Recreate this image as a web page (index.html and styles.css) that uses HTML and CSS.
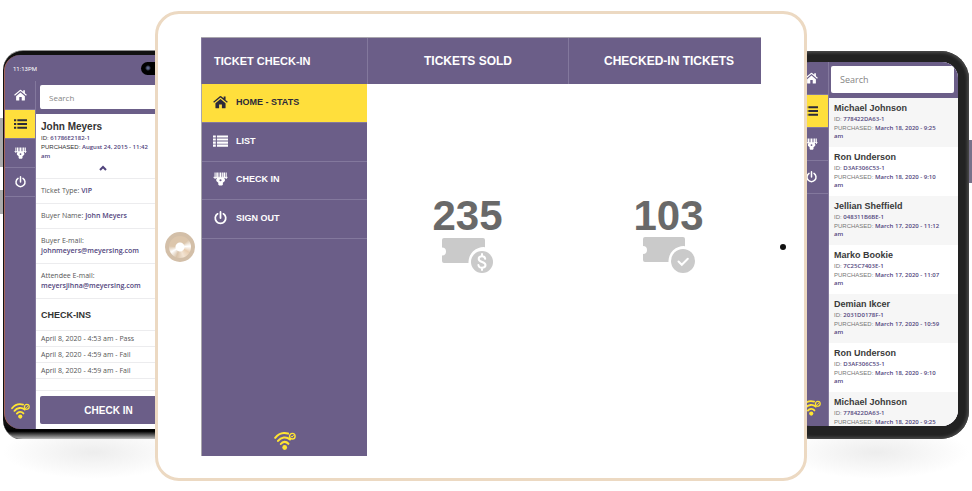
FILE: index.html
```html
<!DOCTYPE html>
<html lang="en">

<head>
    <meta charset="UTF-8">
    <meta name="viewport" content="width=device-width, initial-scale=1.0">
    <title>Ticket Check-In</title>
    <link rel="stylesheet" href="styles.css">
</head>

<body>
    <!-- Shared icons -->
    <svg class="icon-defs" width="0" height="0" aria-hidden="true">
        <symbol id="icon-home" viewBox="0 0 16 14">
            <path d="M8 3.9 2.6 8.4V13a.7.7 0 0 0 .7.7h3.2V9.6h3v4.1h3.2a.7.7 0 0 0 .7-.7V8.4z" />
            <path d="M15.8 6.8 13.4 4.8V1h-2v2.1L8.7.8a1.1 1.1 0 0 0-1.4 0L.2 6.8l.9 1.1L8 2.2l6.9 5.7z" />
        </symbol>
        <symbol id="icon-list" viewBox="0 0 16 12">
            <path d="M0 0h3v2.2H0zM4.2 0H16v2.2H4.2zM0 3.3h3v2.2H0zM4.2 3.3H16v2.2H4.2zM0 6.6h3v2.2H0zM4.2 6.6H16v2.2H4.2zM0 9.8h3V12H0zM4.2 9.8H16V12H4.2z" />
        </symbol>
        <symbol id="icon-bullets" viewBox="0 0 14 11">
            <path d="M0 .5h2.4v2H0zM3.6.5H14v2H3.6zM0 4.5h2.4v2H0zM3.6 4.5H14v2H3.6zM0 8.5h2.4v2H0zM3.6 8.5H14v2H3.6z" />
        </symbol>
        <symbol id="icon-scan" viewBox="0 0 16 16">
            <path d="M1.200.5h1.200v7.500H1.200zM3.200.5h1.800v6H3.200zM5.700.5h1v6h-1zM7.300.5H9v6H7.300zM9.700.5h1v6h-1zM11.400.5h1.800v6h-1.800zM13.900.5h1.200v7.500h-1.200z" />
            <path d="M0 5.500h16v1.200H0z" />
            <path fill-rule="evenodd" d="M4 6.800h8.200l.8 1.200v2.400l-2.300 1.800v2.500l-1 .8H6.500l-1-.8v-2.500L3.200 10.400V8zM8 8.200a1.200 1.200 0 1 0 0 2.400 1.200 1.200 0 0 0 0-2.400z" />
        </symbol>
        <symbol id="icon-power" viewBox="0 0 16 16">
            <path d="M4.700 3.200a6 6 0 1 0 6.600 0M8 1v7" fill="none" stroke="currentColor" stroke-width="2" stroke-linecap="round" />
        </symbol>
        <symbol id="icon-wifi" viewBox="0 0 22 18">
            <g fill="none" stroke="currentColor" stroke-width="2.100" stroke-linecap="round">
                <path d="M1.200 5.800C4.500 1.800 9.500.3 14 1.600" />
                <path d="M4 8.900c3-3.800 8.400-4.700 12-1.400" />
                <path d="M6.800 12c2-2.700 5.400-2.800 7.600-.2" />
                <circle cx="18.300" cy="4.200" r="2.800" stroke-width="1.400" />
                <path d="m17.300 4.400.7.700 1.400-1.700" stroke-width="1" />
            </g>
            <circle cx="10.700" cy="15.500" r="2.400" />
        </symbol>
    </svg>

    <main class="showcase">

        <!-- Phone: attendee details -->
        <section class="phone phone-left">
            <span class="side-button volume"></span>
            <span class="side-button power"></span>
            <div class="phone-screen">
                <div class="status-bar">
                    <span>11:13PM</span>
                    <span class="camera-pill"></span>
                </div>
                <div class="phone-body">
                    <nav class="phone-nav">
                        <a href="#" aria-label="Home"><svg class="icon"><use href="#icon-home" /></svg></a>
                        <a href="#" class="active" aria-label="List"><svg class="icon"><use href="#icon-bullets" /></svg></a>
                        <a href="#" aria-label="Check in"><svg class="icon"><use href="#icon-scan" /></svg></a>
                        <a href="#" aria-label="Sign out"><svg class="icon"><use href="#icon-power" /></svg></a>
                        <svg class="wifi"><use href="#icon-wifi" /></svg>
                    </nav>
                    <div class="phone-content">
                        <div class="search-bar">
                            <input type="search" placeholder="Search" aria-label="Search attendees">
                        </div>
                        <div class="attendee">
                            <h2>John Meyers</h2>
                            <p class="code">ID: <b>61786E2182-1</b></p>
                            <p class="date">PURCHASED: <b>August 24, 2015 - 11:42 am</b></p>
                            <svg class="chevron" viewBox="0 0 8 6"><path d="M1 5l3-3 3 3" /></svg>
                        </div>
                        <p class="field">Ticket Type: <b>VIP</b></p>
                        <p class="field">Buyer Name: <b>John Meyers</b></p>
                        <p class="field">Buyer E-mail:<br><b>johnmeyers@meyersing.com</b></p>
                        <p class="field">Attendee E-mail:<br><b>meyersjihna@meyersing.com</b></p>
                        <h3>CHECK-INS</h3>
                        <ul class="log">
                            <li>April 8, 2020 - 4:53 am - Pass</li>
                            <li>April 8, 2020 - 4:59 am - Fail</li>
                            <li>April 8, 2020 - 4:59 am - Fail</li>
                        </ul>
                        <div class="action">
                            <button type="button">CHECK IN</button>
                        </div>
                    </div>
                </div>
            </div>
        </section>

        <!-- Tablet: stats -->
        <section class="tablet">
            <span class="home-button"></span>
            <div class="tablet-screen">
                <header class="tablet-header">
                    <h1>TICKET CHECK-IN</h1>
                    <h2>TICKETS SOLD</h2>
                    <h2>CHECKED-IN TICKETS</h2>
                </header>
                <aside class="sidebar">
                    <nav class="menu">
                        <a href="#" class="active"><svg class="icon"><use href="#icon-home" /></svg>HOME - STATS</a>
                        <a href="#"><svg class="icon"><use href="#icon-list" /></svg>LIST</a>
                        <a href="#"><svg class="icon"><use href="#icon-scan" /></svg>CHECK IN</a>
                        <a href="#"><svg class="icon"><use href="#icon-power" /></svg>SIGN OUT</a>
                    </nav>
                    <svg class="wifi"><use href="#icon-wifi" /></svg>
                </aside>
                <div class="stats">
                    <div class="stat">
                        <strong>235</strong>
                        <svg class="ticket" viewBox="0 0 52 37">
                            <path d="M2 1h39a2 2 0 0 1 2 2v7.200A15 15 0 0 0 26.500 26H2a2 2 0 0 1-2-2v-5.500a4 4 0 0 0 0-8V3a2 2 0 0 1 2-2z" />
                            <circle cx="40" cy="25" r="11" />
                            <path class="mark" d="M43.200 21.800c-.3-1.700-1.600-2.500-3.200-2.500-1.900 0-3.300 1-3.300 2.600 0 3.800 6.800 2.300 6.800 6.100 0 1.700-1.600 2.800-3.500 2.800s-3.400-1-3.600-2.800M40 17v2M40 31v2" />
                        </svg>
                    </div>
                    <div class="stat">
                        <strong>103</strong>
                        <svg class="ticket" viewBox="0 0 52 37">
                            <path d="M2 0h38a2 2 0 0 1 2 2v7.200A15 15 0 0 0 25.500 25H2a2 2 0 0 1-2-2v-6a4 4 0 0 0 0-8V2a2 2 0 0 1 2-2z" />
                            <circle cx="40" cy="24" r="12" />
                            <path class="mark" d="m35.500 24.500 3.300 3.300 6-6" />
                        </svg>
                    </div>
                </div>
            </div>
            <span class="camera"></span>
        </section>

        <!-- Phone: attendee list -->
        <section class="phone phone-right">
            <span class="side-button power"></span>
            <div class="phone-screen">
                <div class="phone-body">
                    <nav class="phone-nav">
                        <a href="#" aria-label="Home"><svg class="icon"><use href="#icon-home" /></svg></a>
                        <a href="#" class="active" aria-label="List"><svg class="icon"><use href="#icon-bullets" /></svg></a>
                        <a href="#" aria-label="Check in"><svg class="icon"><use href="#icon-scan" /></svg></a>
                        <a href="#" aria-label="Sign out"><svg class="icon"><use href="#icon-power" /></svg></a>
                        <svg class="wifi"><use href="#icon-wifi" /></svg>
                    </nav>
                    <div class="phone-content">
                        <div class="search-bar">
                            <input type="search" placeholder="Search" aria-label="Search tickets">
                        </div>
                        <ul class="people">
                            <li>
                                <h3>Michael Johnson</h3>
                                <p class="code">ID: <b>778422DA63-1</b></p>
                                <p class="date">PURCHASED: <b>March 18, 2020 - 9:25 am</b></p>
                            </li>
                            <li>
                                <h3>Ron Underson</h3>
                                <p class="code">ID: <b>D3AF306C53-1</b></p>
                                <p class="date">PURCHASED: <b>March 18, 2020 - 9:10 am</b></p>
                            </li>
                            <li>
                                <h3>Jellian Sheffield</h3>
                                <p class="code">ID: <b>048311B6BE-1</b></p>
                                <p class="date">PURCHASED: <b>March 17, 2020 - 11:12 am</b></p>
                            </li>
                            <li>
                                <h3>Marko Bookie</h3>
                                <p class="code">ID: <b>7C25C7403E-1</b></p>
                                <p class="date">PURCHASED: <b>March 17, 2020 - 11:07 am</b></p>
                            </li>
                            <li>
                                <h3>Demian Ikcer</h3>
                                <p class="code">ID: <b>2031D0178F-1</b></p>
                                <p class="date">PURCHASED: <b>March 17, 2020 - 10:59 am</b></p>
                            </li>
                            <li>
                                <h3>Ron Underson</h3>
                                <p class="code">ID: <b>D3AF306C53-1</b></p>
                                <p class="date">PURCHASED: <b>March 18, 2020 - 9:10 am</b></p>
                            </li>
                            <li>
                                <h3>Michael Johnson</h3>
                                <p class="code">ID: <b>778422DA63-1</b></p>
                                <p class="date">PURCHASED: <b>March 18, 2020 - 9:25</b></p>
                            </li>
                        </ul>
                    </div>
                </div>
            </div>
        </section>

    </main>
</body>

</html>
```

FILE: styles.css
```css
:root {
    --purple: #6b5e88;
    --purple-line: #83789d;
    --purple-text: #51447c;
    --yellow: #ffdf3c;
    --dark: #2d2a3a;
    --line: #ececee;
}

* {
    box-sizing: border-box;
}

body {
    margin: 0;
    font-family: 'Liberation Sans', Arial, sans-serif;
    background-color: #ffffff;
    overflow-x: hidden;
}

h1, h2, h3, p, ul {
    margin: 0;
    padding: 0;
}

ul {
    list-style: none;
}

a {
    text-decoration: none;
}

svg {
    display: block;
    fill: currentColor;
}

.icon-defs {
    position: absolute;
}

.showcase {
    display: grid;
    grid-template-columns: 155fr 652fr 165fr;
    padding-top: 11px;
}

/* Tablet */
.tablet {
    z-index: 1;
    display: grid;
    grid-template-columns: 43px 1fr 43px;
    align-items: center;
    justify-items: center;
    padding: 23px 0 22px;
    border: 3px solid #ecd9c2;
    border-radius: 24px;
    background-color: #ffffff;
}

.home-button {
    width: 30px;
    height: 30px;
    border: 4px solid #d3bfa8;
    border-radius: 50%;
    background: radial-gradient(circle, #ffffff 4px, transparent 5px),
        conic-gradient(#dcc6ac 0deg, #dcc6ac 50deg, #ffffff 85deg, #e8cdb0 120deg, #f3e4d3 160deg, #d9c3aa 200deg, #ffffff 240deg, #dcc6ac 275deg);
}

.camera {
    width: 6px;
    height: 6px;
    border-radius: 50%;
    background-color: #111111;
}

.tablet-screen {
    display: grid;
    grid-template-columns: 166fr 394fr;
    grid-template-rows: 46px 1fr;
    width: 100%;
    min-height: 419px;
    border-top: 1px solid #a9a6ad;
}

.tablet-header {
    grid-column: 1 / 3;
    display: grid;
    grid-template-columns: 166fr 201fr 193fr;
    align-items: stretch;
    background-color: var(--purple);
    color: #ffffff;
}

.tablet-header h1,
.tablet-header h2 {
    display: flex;
    align-items: center;
    justify-content: center;
    border-left: 1px solid var(--purple-line);
    font-size: 12px;
    white-space: nowrap;
}

.tablet-header h1 {
    justify-content: flex-start;
    padding-left: 12px;
    font-size: 11px;
}

.tablet-header h2:last-child,
.stat:last-child {
    padding-left: 8px;
}

.sidebar {
    display: flex;
    flex-direction: column;
    align-items: center;
    justify-content: space-between;
    padding-bottom: 6px;
    border-left: 1px solid #a9a6ad;
    background-color: var(--purple);
}

.menu {
    display: grid;
    grid-auto-rows: 1fr;
    width: 100%;
    height: 155px;
}

.menu a {
    display: flex;
    align-items: center;
    gap: 8px;
    padding: 0 0 2px 11px;
    border-bottom: 1px solid var(--purple-line);
    font-size: 9px;
    font-weight: bold;
    color: #ffffff;
}

.menu .icon {
    width: 15px;
    height: 14px;
}

.menu a.active {
    background-color: var(--yellow);
    color: var(--dark);
}

.wifi {
    width: 22px;
    height: 18px;
    color: #ffe532;
}

.stats {
    display: grid;
    grid-template-columns: 201fr 193fr;
    align-items: start;
    padding-top: 111px;
}

.stat {
    display: flex;
    flex-direction: column;
    align-items: center;
}

.stat strong {
    font-size: 42px;
    line-height: 42px;
    color: #696969;
}

.ticket {
    width: 52px;
    height: 37px;
    color: #cacaca;
}

.ticket .mark {
    fill: none;
    stroke: #ffffff;
    stroke-width: 2;
    stroke-linecap: round;
}

/* Phones */
.phone {
    position: relative;
    display: flex;
}

.phone::after {
    content: "";
    position: absolute;
    top: 100%;
    left: 0;
    right: 0;
    height: 44px;
    background: radial-gradient(ellipse 50% 60% at 50% 30%, #ededed, #ffffff);
}

.phone-left {
    margin: 39px -29px 41px 3px;
    padding: 4px 2px 10px 1px;
    border-top: 1px solid #8f8f8f;
    border-bottom: 1px solid #777777;
    border-radius: 20px;
    background: linear-gradient(#111111 0 96%, #000000 98%, #bdbdbd);
}

.phone-right {
    margin: 40px 3px 42px -24px;
    padding: 11px 11px 13px;
    border-radius: 28px;
    background-color: #222222;
    box-shadow: inset 0 0 3px 2px #484848;
}

.side-button {
    position: absolute;
    width: 3px;
    background-color: #aaaaaa;
}

.phone-left .volume {
    top: 67px;
    left: -3px;
    height: 49px;
}

.phone-left .power {
    top: 139px;
    left: -3px;
    height: 24px;
}

.phone-right .power {
    top: 89px;
    right: -3px;
    height: 43px;
    background-color: #77728a;
}

.phone-screen {
    flex: 1;
    display: flex;
    flex-direction: column;
    min-width: 0;
    border-radius: 16px;
    background-color: var(--purple);
    overflow: hidden;
}

.phone-left .phone-screen {
    border-left: 1px solid #a4655e;
}

.status-bar {
    display: flex;
    align-items: center;
    justify-content: space-between;
    height: 26px;
    padding: 0 11px 0 8px;
    font-family: Roboto, sans-serif;
    font-size: 6px;
    color: #ffffff;
}

.camera-pill {
    width: 30px;
    height: 13px;
    border-radius: 7px;
    background: radial-gradient(circle at 7px 6px, #5a6488 1px, #000000 3px);
}

.phone-body {
    flex: 1;
    display: flex;
    min-height: 0;
}

.phone-nav {
    display: flex;
    flex-direction: column;
    align-items: center;
    width: 31px;
    padding-bottom: 10px;
    border-right: 1px solid var(--purple-line);
}

.phone-nav a {
    display: flex;
    align-items: center;
    justify-content: center;
    width: 100%;
    height: 29px;
    border-bottom: 1px solid var(--purple-line);
    color: #ffffff;
}

.phone-nav a.active {
    background-color: var(--yellow);
    color: var(--dark);
}

.phone-nav .icon {
    width: 13px;
    height: 12px;
}

.phone-nav .wifi {
    width: 19px;
    height: 16px;
    margin-top: auto;
}

.phone-right .phone-nav {
    width: 35px;
}

.phone-right .phone-nav a {
    height: 33px;
}

.phone-content {
    flex: 1;
    display: flex;
    flex-direction: column;
    min-width: 0;
    background-color: #ffffff;
}

.search-bar {
    padding: 4px 5px 5px 4px;
    background-color: var(--purple);
}

.search-bar input {
    display: block;
    width: 100%;
    height: 24px;
    padding: 0 9px;
    border: none;
    border-radius: 2px;
    background-color: #ffffff;
    font-family: 'Open Sans', sans-serif;
    font-size: 8px;
}

.search-bar input::placeholder {
    color: #858585;
}

.phone-right .search-bar {
    padding: 4px 4px 5px 2px;
}

.phone-right .search-bar input {
    height: 27px;
    font-size: 9px;
}

.code,
.date {
    font-size: 6px;
    color: #777777;
}

.code b,
.date b,
.field b {
    font-family: 'Open Sans', sans-serif;
    font-weight: 600;
    color: var(--purple-text);
}

.attendee {
    padding: 7px 28px 7px 5px;
    border-bottom: 1px solid var(--line);
}

.attendee h2 {
    font-size: 10px;
    line-height: 12px;
    color: #333333;
}

.attendee .code {
    line-height: 10px;
    color: #333333;
}

.attendee .date {
    line-height: 9px;
    color: #333333;
}

.chevron {
    width: 8px;
    height: 6px;
    margin: 4px 0 0 58px;
    fill: none;
    stroke: var(--purple-text);
    stroke-width: 2;
}

.field {
    padding: 7px 5px;
    border-bottom: 1px solid var(--line);
    font-family: 'Open Sans', sans-serif;
    font-size: 7px;
    line-height: 10px;
    color: #555555;
}

.phone-left h3 {
    padding: 10px 5px 9px;
    border-bottom: 1px solid var(--line);
    font-size: 9px;
    line-height: 12px;
    color: #333333;
}

.log {
    flex: 1;
    border-bottom: 1px solid var(--line);
}

.log li {
    padding-left: 5px;
    border-bottom: 1px solid var(--line);
    font-family: 'Open Sans', sans-serif;
    font-size: 7px;
    line-height: 15px;
    color: #555555;
}

.action {
    padding: 5px 5px 5px 4px;
}

.action button {
    display: block;
    width: 100%;
    height: 28px;
    border: none;
    border-radius: 2px;
    background-color: var(--purple);
    font-family: inherit;
    font-size: 10px;
    font-weight: bold;
    color: #ffffff;
    cursor: pointer;
}

/* The list fills the phone and is cut off at its bottom edge */
.people {
    flex: 1;
    contain: size;
    overflow: hidden;
}

.people li {
    height: 49px;
    padding: 5px 14px 0 5px;
}

.people li:nth-child(odd) {
    background-color: #f6f6f6;
}

.people h3 {
    font-size: 9px;
    line-height: 11px;
    color: #3a3a3a;
}

.people .code {
    line-height: 10px;
}

.people .date {
    line-height: 8px;
}
```
